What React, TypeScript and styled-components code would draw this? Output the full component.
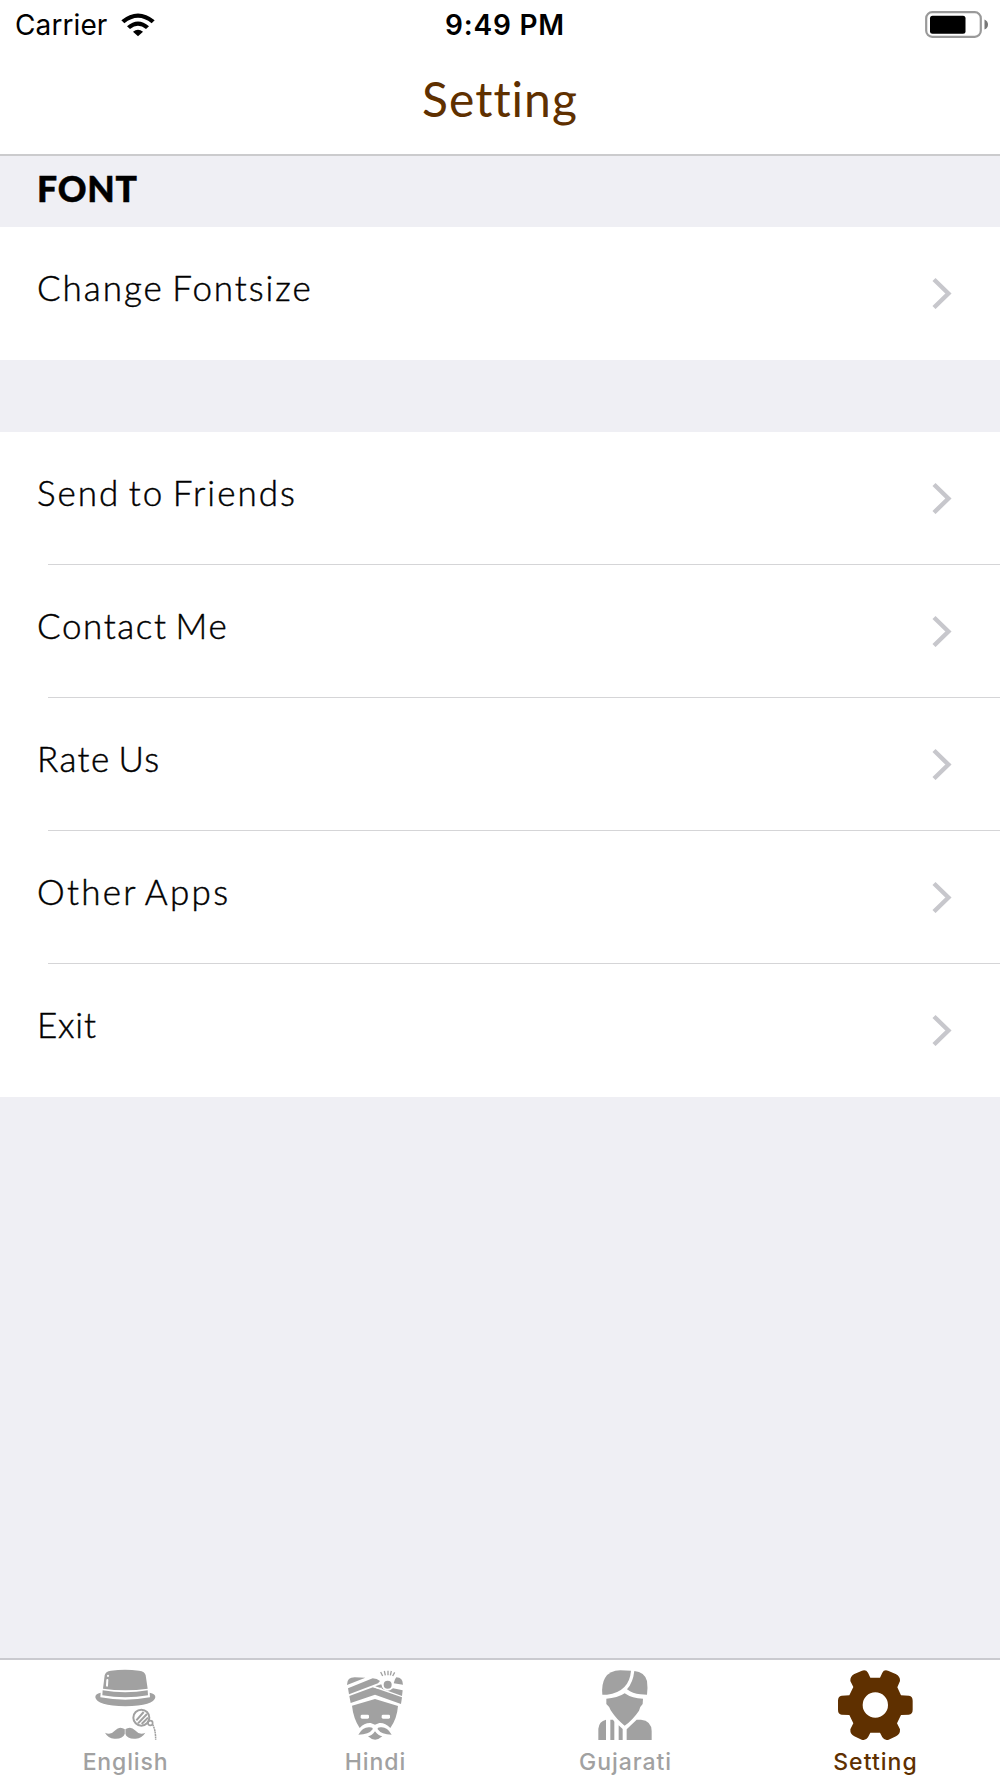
import React from "react";
import styled, { createGlobalStyle } from "styled-components";

const brown = "#5f3000";
const gray = "#a1a1a1";

const GlobalStyle = createGlobalStyle`
  * { box-sizing: border-box; }
  body { margin: 0; background: #efeff4; }
`;

const Screen = styled.div`
  display: flex;
  flex-direction: column;
  width: 1000px;
  height: 1778px;
  background: #efeff4;
  color: #000;
  font-family: Lato, "Open Sans", sans-serif;
  overflow: hidden;
  white-space: nowrap;
`;

const Header = styled.header`
  height: 156px;
  background: #fff;
  border-bottom: 2px solid #cbcbcd;
`;

const StatusBar = styled.div`
  display: grid;
  grid-template-columns: 1fr auto 1fr;
  align-items: center;
  height: 50px;
  padding: 0 12px 0 15px;
  font-family: Inter, "Liberation Sans", sans-serif;
  font-size: 28px;
  line-height: 51px;
`;

const Carrier = styled.div`
  display: flex;
  align-items: center;
  gap: 13px;
  letter-spacing: 0.1px;

  svg { margin-top: -4px; }
`;

const Clock = styled.div`
  padding-left: 7px;
  font-weight: 600;
  letter-spacing: 0.8px;
`;

const BatterySlot = styled.div`
  display: flex;
  justify-content: flex-end;

  svg { margin-top: -2px; }
`;

const Title = styled.h1`
  margin: 0;
  color: ${brown};
  font-size: 48px;
  font-weight: 400;
  line-height: 97px;
  letter-spacing: 1px;
  text-align: center;
`;

const SectionHeader = styled.h2<{ $height: number }>`
  height: ${(p) => p.$height}px;
  margin: 0;
  padding-left: 37px;
  font-size: 35.5px;
  font-weight: 900;
  -webkit-text-stroke: 0.5px #000;
  line-height: 65px;
  letter-spacing: 0.8px;
`;

const List = styled.ul`
  margin: 0;
  padding: 0;
  list-style: none;
  background: #fff;
`;

const Row = styled.li`
  display: flex;
  justify-content: space-between;
  height: 133px;
  padding: 0 48px 0 37px;
  background: linear-gradient(#d5d5d7, #d5d5d7) 48px 100% / 100% 1px no-repeat;
  &:last-child { background: none; }
`;

const Label = styled.span<{ $spacing: number }>`
  font-size: 35px;
  font-weight: 300;
  -webkit-text-stroke: 0.45px #000;
  line-height: 121px;
  letter-spacing: ${(p) => p.$spacing}px;
  word-spacing: -3px;
`;

const Chevron = styled.svg`
  width: 20px;
  height: 32px;
  margin-top: 50px;
`;

const TabBar = styled.nav`
  display: grid;
  grid-template-columns: repeat(4, 1fr);
  height: 120px;
  margin-top: auto;
  background: #fff;
  border-top: 2px solid #cacacf;
`;

const Tab = styled.div<{ $active?: boolean }>`
  display: flex;
  flex-direction: column;
  align-items: center;
  padding-top: 8px;
  color: ${(p) => (p.$active ? brown : gray)};
`;

const TabIcon = styled.svg`
  width: 80px;
  height: 74px;
  fill: currentColor;
`;

const TabLabel = styled.span<{ $spacing: number }>`
  padding-left: 1px;
  font-family: Inter, "Liberation Sans", sans-serif;
  font-size: 23px;
  font-weight: 500;
  line-height: 41px;
  letter-spacing: ${(p) => p.$spacing}px;
`;

const WifiIcon = () => (
  <svg width="36" height="26" viewBox="0 0 108 78">
    <path d="M4 28Q54-13 104 28L95 37Q54 4 13 37Z" />
    <path d="M21 46Q54 17 87 46L78 54Q54 35 30 54Z" />
    <path d="M39 62Q54 50 69 62L54 76Z" />
  </svg>
);

const BatteryIcon = () => (
  <svg width="64" height="30" viewBox="0 0 64 30">
    <rect x="2.2" y="2.2" width="54.6" height="24.6" rx="6" fill="none" stroke="#999" strokeWidth="2.2" />
    <rect x="6" y="5.7" width="35.500" height="18" rx="2.5" />
    <path d="M60.5 9.500Q64 11 64 14.500T60.5 19.500Z" fill="#777" />
  </svg>
);

const EnglishIcon = () => (
  <TabIcon viewBox="45 55 240 222">
    <path d="M99 117L104 77Q106 65 123 63Q165 58 207 63Q225 65 227 77L233 117Q166 127 99 117Z" />
    <path d="M98 122Q166 134 233 122L234 137Q166 149 97 137Z" />
    <path d="M92 129Q75 132 76 143Q80 169 166 170Q252 169 256 143Q257 132 239 129L240 143Q166 157 91 143Z" />
    <path d="M112 91L111 108M114 78v1" stroke="#fff" strokeWidth="6" strokeLinecap="round" />
    <g fill="none" stroke="currentColor">
      <circle cx="214" cy="204" r="24" strokeWidth="6" />
      <path d="M199 212L221 187M204 221L231 193M215 223L234 204" strokeWidth="6" />
      <circle cx="241" cy="220" r="7" strokeWidth="5" />
      <path d="M248 225Q257 240 257 271" strokeWidth="4.500" strokeDasharray="6 1.500" />
    </g>
    <path d="M165 239Q148 228 136 242Q122 258 105 249Q114 266 133 267Q157 269 165 252Q173 269 197 267Q216 266 226 249Q209 258 195 242Q183 228 165 239Z" />
    <path d="M165.500 236v22" stroke="#fff" strokeWidth="2" />
  </TabIcon>
);

const HindiIcon = () => (
  <TabIcon viewBox="45 55 240 222">
    <path d="M81 105Q81 83 104 83L136 84L81 106Z" />
    <path d="M84 116L158 86Q171 86 180 94L174 101L87 134Z" />
    <path d="M88 139L159 113L246 143L243 163L165 135L92 160Z" />
    <path d="M165 110L184 104Q189 121 207 121L219 116L248 122L246 139Z" />
    <path d="M159 110l17 6h9" fill="none" stroke="#fff" strokeWidth="4" />
    <path d="M225 89L229 83Q249 84 249 105L221 101Z" />
    <circle cx="203" cy="105" r="15" fill="currentColor" stroke="#fff" strokeWidth="6" />
    <path d="M182 67L188 79M193 64L196 77M204 63v14M214 64L211 77M224 68L218 79" stroke="currentColor" strokeWidth="4" />
    <path d="M96 168L165 148L234 169Q231 207 211 235Q194 218 178 220L165 225L152 220Q133 219 119 235Q100 206 96 168Z" />
    <g fill="#fff"><rect x="122" y="195" width="25" height="12" rx="4" /><rect x="185" y="195" width="25" height="12" rx="4" /></g>
    <path d="M115 255Q128 233 146 233Q160 232 158 239Q147 255 115 255ZM215 255Q202 233 185 233Q171 232 173 239Q184 255 215 255Z" />
    <path d="M144 260Q156 258 165 245Q175 258 187 260Q165 280 144 260Z" />
  </TabIcon>
);

const GujaratiIcon = () => (
  <TabIcon viewBox="45 55 240 222">
    <path d="M97 135Q94 104 105 85Q119 62 151 62L183 63Q178 126 111 135Z" />
    <path d="M193 64Q224 67 231 94Q234 117 231 135L211 134Q188 132 171 119Q189 99 193 64Z" />
    <path d="M109 147Q142 146 164 131Q187 147 219 147L218 163Q210 170 207 183Q188 211 164 228Q141 211 122 182Q119 171 109 163Z" />
    <path d="M85 271V237Q87 215 108 210V271ZM121 210H129L133 216V271H121ZM146 227L158 238V271H146Z" />
    <path d="M170 271V239L200 210H213Q244 213 245 244V271Z" />
  </TabIcon>
);

const GearIcon = () => (
  <TabIcon viewBox="45 55 240 222">
    <path
      fillRule="evenodd"
      d="M151 84H180L187 69Q192 59 204 63L227 73Q241 80 240 94L232 113L243 137L267 138Q278 140 278 153V180Q278 194 266 195L243 196L231 221L240 239Q241 254 228 260L206 270Q194 274 187 263L180 249H151L144 263Q137 274 125 270L103 260Q90 254 91 239L100 221L88 196L65 195Q54 194 54 180V153Q54 140 65 138L88 137L100 112L91 94Q90 80 103 73L126 63Q138 59 144 69ZM166 128A38 38 0 1 0 166 204A38 38 0 1 0 166 128Z"
    />
  </TabIcon>
);

type Item = { text: string; spacing: number };

const ItemRow = ({ text, spacing }: Item) => (
  <Row>
    <Label $spacing={spacing}>{text}</Label>
    <Chevron viewBox="0 0 20 32">
      <path d="M2 2.500L16.400 16.500L2 30.500" fill="none" stroke="#c7c7cc" strokeWidth="4.400" />
    </Chevron>
  </Row>
);

const actions: Item[] = [
  { text: "Send to Friends", spacing: 2 },
  { text: "Contact Me", spacing: 1.6 },
  { text: "Rate Us", spacing: 1.4 },
  { text: "Other Apps", spacing: 2.3 },
  { text: "Exit", spacing: 0.8 },
];

const tabs = [
  { text: "English", Icon: EnglishIcon, spacing: 0.85 },
  { text: "Hindi", Icon: HindiIcon, spacing: 0.95 },
  { text: "Gujarati", Icon: GujaratiIcon, spacing: 0.95 },
  { text: "Setting", Icon: GearIcon, spacing: 1.05, active: true },
];

export default function App() {
  return (
    <Screen>
      <GlobalStyle />
      <Header>
        <StatusBar>
          <Carrier>
            Carrier
            <WifiIcon />
          </Carrier>
          <Clock>9:49 PM</Clock>
          <BatterySlot>
            <BatteryIcon />
          </BatterySlot>
        </StatusBar>
        <Title>Setting</Title>
      </Header>
      <SectionHeader $height={71}>FONT</SectionHeader>
      <List>
        <ItemRow text="Change Fontsize" spacing={1.95} />
      </List>
      <SectionHeader as="div" $height={72} />
      <List>
        {actions.map((item) => (
          <ItemRow key={item.text} {...item} />
        ))}
      </List>
      <TabBar>
        {tabs.map(({ text, Icon, spacing, active }) => (
          <Tab key={text} $active={active}>
            <Icon />
            <TabLabel $spacing={spacing}>{text}</TabLabel>
          </Tab>
        ))}
      </TabBar>
    </Screen>
  );
}
